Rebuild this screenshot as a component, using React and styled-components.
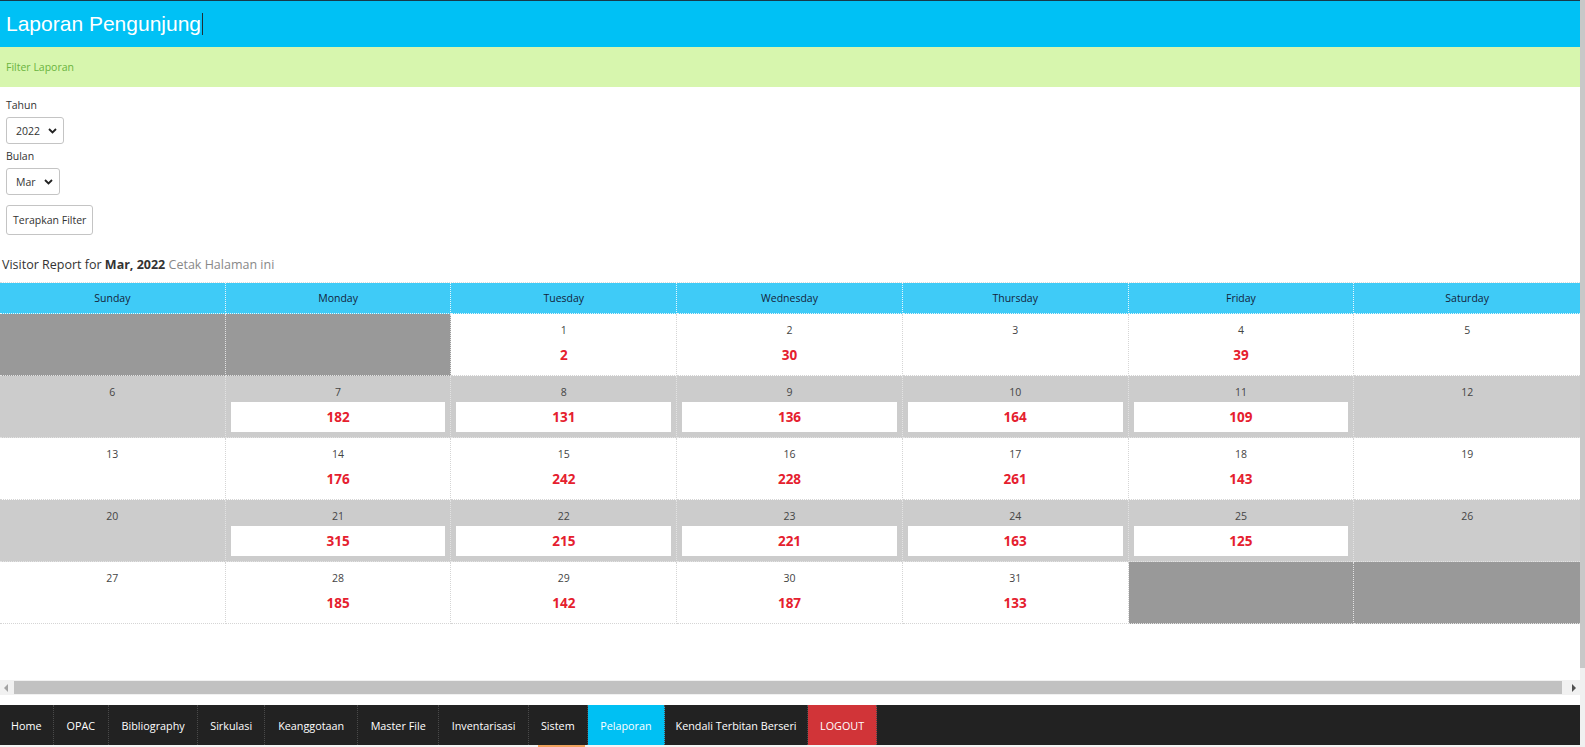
import React from 'react'
import styled, { createGlobalStyle } from 'styled-components'

const GlobalStyle = createGlobalStyle`
  html, body {
    margin: 0;
    padding: 0;
    background: #fff;
    overflow: hidden;
  }
  body {
    font-family: 'Open Sans', 'Noto Sans', Arial, sans-serif;
    color: #333;
  }
`

const Shell = styled.div`
  display: flex;
  width: 1585px;
  height: 747px;
  overflow: hidden;
`

const Main = styled.div`
  width: 1580px;
  display: flex;
  flex-direction: column;
`

const Content = styled.div`
  flex: 1;
  display: flex;
  flex-direction: column;
  overflow: hidden;
`

const TitleBar = styled.header`
  height: 46px;
  border-top: 1px solid #17394a;
  background-color: #00c1f5;
  display: flex;
  align-items: center;
  padding-left: 6px;
`

const Title = styled.h1`
  margin: 0;
  font-family: 'Liberation Sans', Arial, sans-serif;
  font-weight: normal;
  font-size: 21px;
  color: #fff;
  display: flex;
  align-items: center;
`

const Caret = styled.span`
  display: inline-block;
  width: 1px;
  height: 22px;
  margin-left: 1px;
  background: #1f2f38;
`

const FilterBar = styled.div`
  height: 40px;
  background-color: #d7f6ae;
  display: flex;
  align-items: center;
  padding-left: 6px;
  font-size: 10.5px;
  color: #6ab43e;
`

const Form = styled.form`
  display: flex;
  flex-direction: column;
  align-items: flex-start;
  padding: 11px 6px 0;
`

const Label = styled.label`
  font-size: 10.5px;
  color: #333;
  line-height: 14px;
  margin-bottom: ${p => p.gap || 4}px;
`

const SelectBox = styled.div`
  width: ${p => p.w}px;
  height: 27px;
  box-sizing: border-box;
  border: 1px solid #c4c4c4;
  border-radius: 3px;
  display: flex;
  align-items: center;
  justify-content: space-between;
  padding: 0 6px 0 9px;
  font-size: 10.5px;
  color: #333;
  margin-bottom: 5px;
`

const Chevron = () => (
  <svg width="9" height="6" viewBox="0 0 9 6">
    <path d="M1 1 L4.5 4.5 L8 1" stroke="#222" strokeWidth="1.8" fill="none" />
  </svg>
)

const Button = styled.button`
  height: 30px;
  box-sizing: border-box;
  border: 1px solid #c4c4c4;
  border-radius: 3px;
  background: #fff;
  font-family: inherit;
  font-size: 10.5px;
  color: #333;
  padding: 0 6px;
  margin-top: 5px;
`

const ReportLine = styled.p`
  margin: 21px 0 0 2px;
  font-size: 12.5px;
  line-height: 18px;
  color: #333;
`

const PrintLink = styled.span`
  color: #888;
`

const Calendar = styled.div`
  margin-top: 8px;
  display: grid;
  grid-template-columns: repeat(7, 1fr);
  border-top: 1px dotted #ddd;
`

const DayHead = styled.div`
  height: 30px;
  background-color: #3fcbf7;
  display: flex;
  align-items: center;
  justify-content: center;
  font-size: 10.5px;
  color: #13233a;
  border-right: 1px dotted #e6f7fd;
  border-bottom: 1px dotted #e6f7fd;
  &:nth-child(7n) {
    border-right: none;
  }
`

const Cell = styled.div`
  background-color: ${p => (p.empty ? '#999' : p.shade ? '#ccc' : '#fff')};
  border-right: 1px dotted ${p => (p.empty || p.shade ? '#e3e3e3' : '#d5d5d5')};
  border-bottom: 1px dotted ${p => (p.empty || p.shade ? '#e3e3e3' : '#d5d5d5')};
  padding: 7px 5px 5px;
  min-height: 49px;
  display: flex;
  flex-direction: column;
  align-items: center;
  &:nth-child(7n) {
    border-right: none;
  }
`

const DayNum = styled.div`
  font-size: 10.5px;
  line-height: 18px;
  color: #444;
`

const Count = styled.div`
  align-self: stretch;
  margin-top: 1px;
  height: 30px;
  background: #fff;
  display: flex;
  align-items: center;
  justify-content: center;
  font-size: 13.5px;
  font-weight: 700;
  color: #e5202e;
`

const HScroll = styled.div`
  height: 15px;
  margin-bottom: 10px;
  background: #f1f1f1;
  display: flex;
  align-items: center;
  gap: 5px;
  padding: 0 4px;
`

const Arrow = styled.div`
  width: 0;
  height: 0;
  border-top: 4px solid transparent;
  border-bottom: 4px solid transparent;
  ${p => (p.dir === 'left' ? 'border-right: 4px solid #a3a3a3;' : 'border-left: 4px solid #505050;')}
`

const HThumb = styled.div`
  flex: 1;
  height: 13px;
  margin: 0 5px 0 1px;
  background: #c1c1c1;
`

const Nav = styled.nav`
  height: 40px;
  background-color: #222;
  display: flex;
`

const NavItem = styled.a`
  display: flex;
  align-items: center;
  padding: 0 ${p => p.pad || 11}px;
  font-size: 10.8px;
  color: #fff;
  text-decoration: none;
  border-right: 1px dotted #4a4a4a;
  background-color: ${p => (p.active ? '#00c0f3' : p.danger ? '#d13438' : 'transparent')};
  white-space: nowrap;
`

const BottomStrip = styled.div`
  height: 2px;
  background: #f4f4f4;
  display: flex;
`

const StripMark = styled.div`
  width: 47px;
  margin-left: 538px;
  background: #f0a35e;
`

const VScroll = styled.div`
  width: 5px;
  background: #f0f0f0;
`

const VThumb = styled.div`
  height: 668px;
  background: #c8c8c8;
`

const days = ['Sunday', 'Monday', 'Tuesday', 'Wednesday', 'Thursday', 'Friday', 'Saturday']

const weeks = [
  [null, null, [1, 2], [2, 30], [3], [4, 39], [5]],
  [[6], [7, 182], [8, 131], [9, 136], [10, 164], [11, 109], [12]],
  [[13], [14, 176], [15, 242], [16, 228], [17, 261], [18, 143], [19]],
  [[20], [21, 315], [22, 215], [23, 221], [24, 163], [25, 125], [26]],
  [[27], [28, 185], [29, 142], [30, 187], [31, 133], null, null],
]

const menu = [
  { label: 'Home', pad: 11 },
  { label: 'OPAC', pad: 13 },
  { label: 'Bibliography', pad: 12.5 },
  { label: 'Sirkulasi', pad: 12 },
  { label: 'Keanggotaan', pad: 13 },
  { label: 'Master File', pad: 12.5 },
  { label: 'Inventarisasi', pad: 12.5 },
  { label: 'Sistem', pad: 12 },
  { label: 'Pelaporan', pad: 12.5, active: true },
  { label: 'Kendali Terbitan Berseri', pad: 10.5 },
  { label: 'LOGOUT', pad: 12, danger: true },
]

export default function App() {
  return (
    <>
      <GlobalStyle />
      <Shell>
        <Main>
          <Content>
            <TitleBar>
              <Title>
                Laporan Pengunjung
                <Caret />
              </Title>
            </TitleBar>
            <FilterBar>Filter Laporan</FilterBar>
            <Form onSubmit={e => e.preventDefault()}>
              <Label gap={5}>Tahun</Label>
              <SelectBox w={58}>
                2022 <Chevron />
              </SelectBox>
              <Label gap={5}>Bulan</Label>
              <SelectBox w={54}>
                Mar <Chevron />
              </SelectBox>
              <Button type="submit">Terapkan Filter</Button>
            </Form>
            <ReportLine>
              Visitor Report for <b>Mar, 2022</b> <PrintLink>Cetak Halaman ini</PrintLink>
            </ReportLine>
            <Calendar>
              {days.map(d => (
                <DayHead key={d}>{d}</DayHead>
              ))}
              {weeks.map((week, wi) =>
                week.map((day, di) =>
                  day ? (
                    <Cell key={`${wi}-${di}`} shade={wi % 2 === 1}>
                      <DayNum>{day[0]}</DayNum>
                      {day[1] != null && <Count>{day[1]}</Count>}
                    </Cell>
                  ) : (
                    <Cell key={`${wi}-${di}`} empty />
                  )
                )
              )}
            </Calendar>
          </Content>
          <HScroll>
            <Arrow dir="left" />
            <HThumb />
            <Arrow dir="right" />
          </HScroll>
          <Nav>
            {menu.map(m => (
              <NavItem key={m.label} href="#" pad={m.pad} active={m.active} danger={m.danger}>
                {m.label}
              </NavItem>
            ))}
          </Nav>
          <BottomStrip>
            <StripMark />
          </BottomStrip>
        </Main>
        <VScroll>
          <VThumb />
        </VScroll>
      </Shell>
    </>
  )
}
